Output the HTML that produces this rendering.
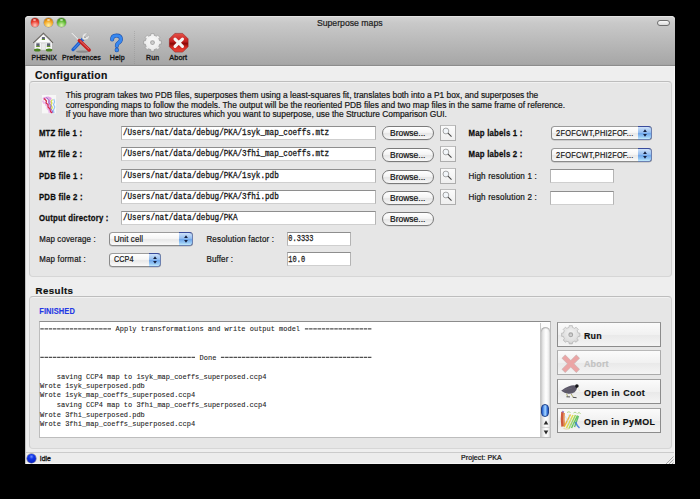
<!DOCTYPE html><html><head><meta charset="utf-8"><style>
html,body{margin:0;padding:0;}
body{width:700px;height:499px;background:#000;position:relative;overflow:hidden;font-family:'Liberation Sans',sans-serif;}
.t{position:absolute;white-space:pre;line-height:1;}
svg{overflow:visible}
.s{position:absolute;left:0;top:0;}
</style></head><body>
<div style="position:absolute;left:25.00px;top:16.00px;width:650.00px;height:448.00px;box-sizing:border-box;background:#eeeeee;border-radius:4px 4px 0 0;"></div>
<div style="position:absolute;left:25.00px;top:16.00px;width:650.00px;height:49.00px;box-sizing:border-box;border-radius:4px 4px 0 0;background:linear-gradient(#d3d3d3,#c9c9c9 12%,#a7a7a7 97%,#a2a2a2);border-top:1px solid #e4e4e4;"></div>
<div style="position:absolute;left:25.00px;top:64.60px;width:650.00px;height:1.00px;box-sizing:border-box;background:#8c8c8c;"></div>
<div style="position:absolute;left:25.00px;top:65.60px;width:650.00px;height:0.80px;box-sizing:border-box;background:#f2f2f2;"></div>
<div style="position:absolute;left:25.00px;top:66.00px;width:1.00px;height:398.00px;box-sizing:border-box;background:#c4c4c4;"></div>
<div style="position:absolute;left:674.00px;top:66.00px;width:1.00px;height:398.00px;box-sizing:border-box;background:#f6f6f6;"></div>
<div style="position:absolute;left:30.50px;top:18.3px;width:8.8px;height:8.8px;border-radius:50%;background:radial-gradient(circle at 50% 80%, #ffc9c0 0%, #ea3a2c 52%, #921c12 100%);box-shadow:0 0 0 0.5px rgba(60,60,60,.45);"></div>
<div style="position:absolute;left:33.30px;top:19.0px;width:3.2px;height:2.0px;border-radius:50%;background:rgba(255,255,255,.6);"></div>
<div style="position:absolute;left:44.00px;top:18.3px;width:8.8px;height:8.8px;border-radius:50%;background:radial-gradient(circle at 50% 80%, #fff3a8 0%, #f4a41e 52%, #a85c06 100%);box-shadow:0 0 0 0.5px rgba(60,60,60,.45);"></div>
<div style="position:absolute;left:46.80px;top:19.0px;width:3.2px;height:2.0px;border-radius:50%;background:rgba(255,255,255,.6);"></div>
<div style="position:absolute;left:57.20px;top:18.3px;width:8.8px;height:8.8px;border-radius:50%;background:radial-gradient(circle at 50% 80%, #dcf8b6 0%, #5cb830 52%, #2d6c10 100%);box-shadow:0 0 0 0.5px rgba(60,60,60,.45);"></div>
<div style="position:absolute;left:60.00px;top:19.0px;width:3.2px;height:2.0px;border-radius:50%;background:rgba(255,255,255,.6);"></div>
<svg class="s" width="1" height="1"><text transform="translate(316.90 25.80) scale(1 1.13)" fill="#1e1e1e" stroke="#1e1e1e" stroke-width="0.2" style="font-family:'Liberation Sans', sans-serif;font-size:8.7px;font-weight:normal;white-space:pre;">Superpose maps</text></svg>
<div style="position:absolute;left:657.00px;top:19.50px;width:13.00px;height:6.50px;box-sizing:border-box;border-radius:3.5px;border:1px solid #6e6e6e;background:linear-gradient(#fafafa,#dadada);"></div>
<svg class="s" width="1" height="1"><text transform="translate(31.60 60.00) scale(1 1.0)" fill="#141414" stroke="#141414" stroke-width="0.32" style="font-family:'Liberation Sans', sans-serif;font-size:6.8px;font-weight:normal;white-space:pre;">PHENIX</text></svg>
<svg class="s" width="1" height="1"><text transform="translate(62.10 60.00) scale(1 1.0)" fill="#141414" stroke="#141414" stroke-width="0.32" style="font-family:'Liberation Sans', sans-serif;font-size:7.0px;font-weight:normal;white-space:pre;letter-spacing:0.1px;">Preferences</text></svg>
<svg class="s" width="1" height="1"><text transform="translate(109.70 60.00) scale(1 1.0)" fill="#141414" stroke="#141414" stroke-width="0.32" style="font-family:'Liberation Sans', sans-serif;font-size:7.1px;font-weight:normal;white-space:pre;letter-spacing:0.1px;">Help</text></svg>
<svg class="s" width="1" height="1"><text transform="translate(146.00 60.00) scale(1 1.0)" fill="#141414" stroke="#141414" stroke-width="0.32" style="font-family:'Liberation Sans', sans-serif;font-size:7.0px;font-weight:normal;white-space:pre;letter-spacing:0.1px;">Run</text></svg>
<svg class="s" width="1" height="1"><text transform="translate(169.30 60.00) scale(1 1.0)" fill="#141414" stroke="#141414" stroke-width="0.32" style="font-family:'Liberation Sans', sans-serif;font-size:7.3px;font-weight:normal;white-space:pre;letter-spacing:0.1px;">Abort</text></svg>
<div style="position:absolute;left:134.30px;top:31.00px;width:1.00px;height:32.50px;box-sizing:border-box;background:repeating-linear-gradient(#8a8a8a 0 1px, transparent 1px 2px);opacity:.4;"></div>
<svg style="position:absolute;left:33px;top:32px;" width="21" height="20" viewBox="0 0 21 20">
<path d="M1.7 10.7 L10.3 2.3 L18.9 10.7Z" fill="#fbfbfb"/>
<rect x="1.6" y="10.3" width="17.4" height="7.6" fill="#f3f3f3"/>
<rect x="1.6" y="10.2" width="17.4" height="0.7" fill="#d8d8d8"/>
<path d="M0.4 10.9 L10.3 1.2 L20.2 10.9" stroke="#4f4a44" stroke-width="1.05" fill="none" stroke-dasharray="1.1 0.35"/>
<rect x="8.6" y="11.2" width="3.8" height="6.7" fill="#e9e9e9" stroke="#c4c4c4" stroke-width="0.35"/>
<rect x="3.3" y="11.3" width="3.3" height="3.5" fill="#5c6072"/><rect x="3.3" y="13.9" width="3.3" height="1.1" fill="#6a9a30"/>
<rect x="13.9" y="11.3" width="3.3" height="3.5" fill="#5c6072"/><rect x="13.9" y="13.9" width="3.3" height="1.1" fill="#6a9a30"/>
<rect x="8.9" y="5.1" width="3" height="2.9" fill="#5c6072"/><rect x="8.9" y="7.0" width="3" height="1.0" fill="#6a9a30"/>
<ellipse cx="4.3" cy="17.9" rx="3.3" ry="1.5" fill="#4b8420"/><ellipse cx="16.1" cy="17.9" rx="3.3" ry="1.5" fill="#4b8420"/>
</svg>
<svg style="position:absolute;left:68px;top:30px;" width="28" height="24" viewBox="0 0 28 24">
<ellipse cx="14.5" cy="21.6" rx="6.5" ry="1.1" fill="rgba(0,0,0,.22)"/>
<line x1="3.8" y1="3.1" x2="12" y2="11.3" stroke="#f6f6f6" stroke-width="0.95"/>
<path d="M15.5 8.5 L5 19.6" stroke="#1c5fd0" stroke-width="3.3" stroke-linecap="round"/>
<path d="M14.6 9.6 L5.6 19" stroke="#6aa6f0" stroke-width="0.8"/>
<path d="M14.2 8.8 Q13.4 4.6 16.6 3.2 Q18.2 2.6 19.4 3.1 L17.4 5.4 L18.8 6.9 L21 4.9 Q21.6 6.4 21 7.8 Q19.6 10.4 16 9.9Z" fill="#e6e6e6" stroke="#a6a6a6" stroke-width="0.45"/>
<circle cx="17.0" cy="7.1" r="0.9" fill="#8c8c8c"/>
<path d="M11.3 10.6 L21.2 20" stroke="#c51c1c" stroke-width="3.4" stroke-linecap="round"/>
<path d="M11.8 10.4 L21.1 19.3" stroke="#f0a0a0" stroke-width="0.7"/>
</svg>
<svg style="position:absolute;left:109px;top:33.5px;" width="15" height="19" viewBox="0 0 15 19">
<path d="M3.1 5.6 Q3.1 1.6 7.5 1.6 Q11.9 1.6 11.9 5.3 Q11.9 7.5 9.3 8.9 Q7.8 9.8 7.8 11.9" fill="none" stroke="#1d4fa8" stroke-width="4.0" stroke-linecap="round"/>
<path d="M3.1 5.6 Q3.1 1.6 7.5 1.6 Q11.9 1.6 11.9 5.3 Q11.9 7.5 9.3 8.9 Q7.8 9.8 7.8 11.9" fill="none" stroke="#3888f0" stroke-width="2.9" stroke-linecap="round"/>
<circle cx="7.8" cy="16" r="2.2" fill="#1d4fa8"/><circle cx="7.8" cy="16" r="1.65" fill="#3888f0"/>
</svg>
<svg style="position:absolute;left:142.8px;top:32.6px;" width="19" height="19" viewBox="0 0 20 20"><defs><radialGradient id="g1" cx="50%" cy="40%" r="65%"><stop offset="0" stop-color="#fafafa"/><stop offset="0.7" stop-color="#ececec"/><stop offset="1" stop-color="#d6d6d6"/></radialGradient></defs>
<polygon points="17.11,7.05 17.49,8.20 19.36,8.37 19.36,11.63 17.49,11.80 17.11,12.95 16.57,14.02 17.77,15.46 15.46,17.77 14.02,16.57 12.95,17.11 11.80,17.49 11.63,19.36 8.37,19.36 8.20,17.49 7.05,17.11 5.98,16.57 4.54,17.77 2.23,15.46 3.43,14.02 2.89,12.95 2.51,11.80 0.64,11.63 0.64,8.37 2.51,8.20 2.89,7.05 3.43,5.98 2.23,4.54 4.54,2.23 5.98,3.43 7.05,2.89 8.20,2.51 8.37,0.64 11.63,0.64 11.80,2.51 12.95,2.89 14.02,3.43 15.46,2.23 17.77,4.54 16.57,5.98" fill="url(#g1)" stroke="#8e8e8e" stroke-width="0.6" stroke-linejoin="round"/>
<circle cx="10" cy="10" r="2.5" fill="#a4a4a4"/><circle cx="10" cy="10.2" r="1.4" fill="#cfcfcf"/></svg>
<svg style="position:absolute;left:168.5px;top:32.6px;" width="19.5" height="19.5" viewBox="0 0 20 20">
<defs><linearGradient id="ab" x1="0" y1="0" x2="0" y2="1"><stop offset="0" stop-color="#e65048"/><stop offset="0.42" stop-color="#c42020"/><stop offset="0.55" stop-color="#8c0808"/><stop offset="0.75" stop-color="#d82a22"/><stop offset="1" stop-color="#e84a40"/></linearGradient></defs>
<polygon points="6,0.4 14,0.4 19.6,6 19.6,14 14,19.6 6,19.6 0.4,14 0.4,6" fill="url(#ab)" stroke="#8a1010" stroke-width="0.5" stroke-linejoin="round"/>
<path d="M6.2 6.2 L13.8 13.8 M13.8 6.2 L6.2 13.8" stroke="#f4f4f4" stroke-width="3.2" stroke-linecap="round"/>
</svg>
<svg class="s" width="1" height="1"><text transform="translate(35.00 79.00) scale(1 1.0)" fill="#0e0e0e" stroke="#0e0e0e" stroke-width="0.15" style="font-family:'Liberation Sans', sans-serif;font-size:10.4px;font-weight:bold;white-space:pre;letter-spacing:0.35px;">Configuration</text></svg>
<div style="position:absolute;left:28.70px;top:80.60px;width:643.10px;height:196.20px;box-sizing:border-box;border:1px solid #cfcfcf;border-top-color:#bdbdbd;border-bottom-color:#d6d6d6;border-radius:4px;background:#e6e6e6;box-shadow:inset 0 1px 0 rgba(255,255,255,.45);"></div>
<svg style="position:absolute;left:39px;top:93px;" width="20" height="23" viewBox="0 0 20 23">
<rect x="2.8" y="1.8" width="14.5" height="19" fill="#f7f7f7" stroke="#e2e2e2" stroke-width="0.4"/>
<path d="M4 6 L6 5 L9 4.5 L11.5 5.5 L10 7.5 L11 9.5 L9.5 11.5 L11 13.5 L10.5 16 L12 18.5 L12.5 20" fill="none" stroke="#de8ade" stroke-width="2.2" opacity=".75" stroke-linejoin="round"/>
<path d="M3.6 7.5 L5 10 L6.5 9.5 L7 12 L8.5 13 L8.5 15.5 L10 17 L10.5 20" fill="none" stroke="#e6a0e6" stroke-width="1.8" opacity=".7" stroke-linejoin="round"/>
<path d="M5 5.5 L7.5 8 L7 10 L9 11.5 L9 14 L11 16 L11.5 18.5 L13 20" fill="none" stroke="#d42a48" stroke-width="1.1" stroke-linejoin="round"/>
<path d="M13.5 6.5 L12 8.5 L13 10 L11.8 12 L13.2 14 L12.5 16.5" fill="none" stroke="#d6da3e" stroke-width="1.2" stroke-linejoin="round"/>
<path d="M14.8 6 L15.6 9 L14.5 11.5 L15.8 14 L14.5 17 L15 20" fill="none" stroke="#90c4f2" stroke-width="1.1" stroke-linejoin="round"/>
<path d="M7.5 4.5 L10 7.5 L9.8 10 L12 12.5 L11.5 15.5 L13.5 18 L13.8 20.2" fill="none" stroke="#8458c4" stroke-width="0.9" stroke-linejoin="round"/>
</svg>
<svg class="s" width="1" height="1"><text transform="translate(65.70 98.00) scale(1 1.0)" fill="#161616" stroke="#161616" stroke-width="0.2" style="font-family:'Liberation Sans', sans-serif;font-size:8.4px;font-weight:normal;white-space:pre;">This program takes two PDB files, superposes them using a least-squares fit, translates both into a P1 box, and superposes the</text></svg>
<svg class="s" width="1" height="1"><text transform="translate(65.70 108.00) scale(1 1.0)" fill="#161616" stroke="#161616" stroke-width="0.2" style="font-family:'Liberation Sans', sans-serif;font-size:8.4px;font-weight:normal;white-space:pre;">corresponding maps to follow the models. The output will be the reoriented PDB files and two map files in the same frame of reference.</text></svg>
<svg class="s" width="1" height="1"><text transform="translate(65.70 117.00) scale(1 1.0)" fill="#161616" stroke="#161616" stroke-width="0.2" style="font-family:'Liberation Sans', sans-serif;font-size:8.4px;font-weight:normal;white-space:pre;">If you have more than two structures which you want to superpose, use the Structure Comparison GUI.</text></svg>
<svg class="s" width="1" height="1"><text transform="translate(38.90 136.00) scale(1 1.14)" fill="#0c0c0c" stroke="#0c0c0c" stroke-width="0.22" style="font-family:'Liberation Sans', sans-serif;font-size:7.8px;font-weight:bold;white-space:pre;letter-spacing:0.22px;">MTZ file 1 :</text></svg>
<div style="position:absolute;left:121.00px;top:126.00px;width:254.50px;height:14.00px;box-sizing:border-box;background:#fff;border:1px solid #b4b4b4;border-top-color:#8e8e8e;border-bottom-color:#cfcfcf;"></div>
<svg class="s" width="1" height="1"><text transform="translate(122.90 135.00) scale(1 1.12)" fill="#151515" stroke="#151515" stroke-width="0.25" style="font-family:'Liberation Mono', monospace;font-size:7.65px;font-weight:normal;white-space:pre;">/Users/nat/data/debug/PKA/1syk_map_coeffs.mtz</text></svg>
<div style="position:absolute;left:381.70px;top:126.00px;width:51.90px;height:14.00px;box-sizing:border-box;border-radius:7.0px;border:1px solid #7a7a7a;background:linear-gradient(#ffffff,#f4f4f4 45%,#e6e6e6 55%,#f8f8f8);box-shadow:0 0.6px 0.4px rgba(0,0,0,.12);"></div>
<svg class="s" width="1" height="1"><text transform="translate(390.00 136.00) scale(1 1.0)" fill="#111" stroke="#111" stroke-width="0.2" style="font-family:'Liberation Sans', sans-serif;font-size:8.5px;font-weight:normal;white-space:pre;">Browse...</text></svg>
<div style="position:absolute;left:440.20px;top:125.30px;width:15.50px;height:15.40px;box-sizing:border-box;border:1px solid #adadad;border-top-color:#bdbdbd;background:linear-gradient(#fbfbfb,#efefef);"></div>
<svg style="position:absolute;left:440.2px;top:125.3px;" width="15" height="15" viewBox="0 0 15 15"><circle cx="5.9" cy="6.0" r="2.9" fill="#f2f6fa" stroke="#8a8a8a" stroke-width="0.75"/><line x1="8.0" y1="8.2" x2="11.5" y2="11.7" stroke="#454545" stroke-width="1.05"/></svg>
<svg class="s" width="1" height="1"><text transform="translate(38.90 157.00) scale(1 1.14)" fill="#0c0c0c" stroke="#0c0c0c" stroke-width="0.22" style="font-family:'Liberation Sans', sans-serif;font-size:7.8px;font-weight:bold;white-space:pre;letter-spacing:0.22px;">MTZ file 2 :</text></svg>
<div style="position:absolute;left:121.00px;top:147.00px;width:254.50px;height:14.00px;box-sizing:border-box;background:#fff;border:1px solid #b4b4b4;border-top-color:#8e8e8e;border-bottom-color:#cfcfcf;"></div>
<svg class="s" width="1" height="1"><text transform="translate(122.90 156.00) scale(1 1.12)" fill="#151515" stroke="#151515" stroke-width="0.25" style="font-family:'Liberation Mono', monospace;font-size:7.65px;font-weight:normal;white-space:pre;">/Users/nat/data/debug/PKA/3fhi_map_coeffs.mtz</text></svg>
<div style="position:absolute;left:381.70px;top:148.00px;width:51.90px;height:14.00px;box-sizing:border-box;border-radius:7.0px;border:1px solid #7a7a7a;background:linear-gradient(#ffffff,#f4f4f4 45%,#e6e6e6 55%,#f8f8f8);box-shadow:0 0.6px 0.4px rgba(0,0,0,.12);"></div>
<svg class="s" width="1" height="1"><text transform="translate(390.00 158.00) scale(1 1.0)" fill="#111" stroke="#111" stroke-width="0.2" style="font-family:'Liberation Sans', sans-serif;font-size:8.5px;font-weight:normal;white-space:pre;">Browse...</text></svg>
<div style="position:absolute;left:440.20px;top:146.30px;width:15.50px;height:15.40px;box-sizing:border-box;border:1px solid #adadad;border-top-color:#bdbdbd;background:linear-gradient(#fbfbfb,#efefef);"></div>
<svg style="position:absolute;left:440.2px;top:146.3px;" width="15" height="15" viewBox="0 0 15 15"><circle cx="5.9" cy="6.0" r="2.9" fill="#f2f6fa" stroke="#8a8a8a" stroke-width="0.75"/><line x1="8.0" y1="8.2" x2="11.5" y2="11.7" stroke="#454545" stroke-width="1.05"/></svg>
<svg class="s" width="1" height="1"><text transform="translate(38.90 179.00) scale(1 1.14)" fill="#0c0c0c" stroke="#0c0c0c" stroke-width="0.22" style="font-family:'Liberation Sans', sans-serif;font-size:7.8px;font-weight:bold;white-space:pre;letter-spacing:0.22px;">PDB file 1 :</text></svg>
<div style="position:absolute;left:121.00px;top:169.00px;width:254.50px;height:14.00px;box-sizing:border-box;background:#fff;border:1px solid #b4b4b4;border-top-color:#8e8e8e;border-bottom-color:#cfcfcf;"></div>
<svg class="s" width="1" height="1"><text transform="translate(122.90 178.00) scale(1 1.12)" fill="#151515" stroke="#151515" stroke-width="0.25" style="font-family:'Liberation Mono', monospace;font-size:7.65px;font-weight:normal;white-space:pre;">/Users/nat/data/debug/PKA/1syk.pdb</text></svg>
<div style="position:absolute;left:381.70px;top:170.00px;width:51.90px;height:14.00px;box-sizing:border-box;border-radius:7.0px;border:1px solid #7a7a7a;background:linear-gradient(#ffffff,#f4f4f4 45%,#e6e6e6 55%,#f8f8f8);box-shadow:0 0.6px 0.4px rgba(0,0,0,.12);"></div>
<svg class="s" width="1" height="1"><text transform="translate(390.00 180.00) scale(1 1.0)" fill="#111" stroke="#111" stroke-width="0.2" style="font-family:'Liberation Sans', sans-serif;font-size:8.5px;font-weight:normal;white-space:pre;">Browse...</text></svg>
<div style="position:absolute;left:440.20px;top:168.30px;width:15.50px;height:15.40px;box-sizing:border-box;border:1px solid #adadad;border-top-color:#bdbdbd;background:linear-gradient(#fbfbfb,#efefef);"></div>
<svg style="position:absolute;left:440.2px;top:168.3px;" width="15" height="15" viewBox="0 0 15 15"><circle cx="5.9" cy="6.0" r="2.9" fill="#f2f6fa" stroke="#8a8a8a" stroke-width="0.75"/><line x1="8.0" y1="8.2" x2="11.5" y2="11.7" stroke="#454545" stroke-width="1.05"/></svg>
<svg class="s" width="1" height="1"><text transform="translate(38.90 200.40) scale(1 1.14)" fill="#0c0c0c" stroke="#0c0c0c" stroke-width="0.22" style="font-family:'Liberation Sans', sans-serif;font-size:7.8px;font-weight:bold;white-space:pre;letter-spacing:0.22px;">PDB file 2 :</text></svg>
<div style="position:absolute;left:121.00px;top:190.00px;width:254.50px;height:14.00px;box-sizing:border-box;background:#fff;border:1px solid #b4b4b4;border-top-color:#8e8e8e;border-bottom-color:#cfcfcf;"></div>
<svg class="s" width="1" height="1"><text transform="translate(122.90 199.00) scale(1 1.12)" fill="#151515" stroke="#151515" stroke-width="0.25" style="font-family:'Liberation Mono', monospace;font-size:7.65px;font-weight:normal;white-space:pre;">/Users/nat/data/debug/PKA/3fhi.pdb</text></svg>
<div style="position:absolute;left:381.70px;top:191.00px;width:51.90px;height:14.00px;box-sizing:border-box;border-radius:7.0px;border:1px solid #7a7a7a;background:linear-gradient(#ffffff,#f4f4f4 45%,#e6e6e6 55%,#f8f8f8);box-shadow:0 0.6px 0.4px rgba(0,0,0,.12);"></div>
<svg class="s" width="1" height="1"><text transform="translate(390.00 201.00) scale(1 1.0)" fill="#111" stroke="#111" stroke-width="0.2" style="font-family:'Liberation Sans', sans-serif;font-size:8.5px;font-weight:normal;white-space:pre;">Browse...</text></svg>
<div style="position:absolute;left:440.20px;top:189.30px;width:15.50px;height:15.40px;box-sizing:border-box;border:1px solid #adadad;border-top-color:#bdbdbd;background:linear-gradient(#fbfbfb,#efefef);"></div>
<svg style="position:absolute;left:440.2px;top:189.3px;" width="15" height="15" viewBox="0 0 15 15"><circle cx="5.9" cy="6.0" r="2.9" fill="#f2f6fa" stroke="#8a8a8a" stroke-width="0.75"/><line x1="8.0" y1="8.2" x2="11.5" y2="11.7" stroke="#454545" stroke-width="1.05"/></svg>
<svg class="s" width="1" height="1"><text transform="translate(38.90 221.00) scale(1 1.14)" fill="#0c0c0c" stroke="#0c0c0c" stroke-width="0.22" style="font-family:'Liberation Sans', sans-serif;font-size:7.8px;font-weight:bold;white-space:pre;letter-spacing:0.22px;">Output directory :</text></svg>
<div style="position:absolute;left:121.00px;top:211.00px;width:254.50px;height:14.00px;box-sizing:border-box;background:#fff;border:1px solid #b4b4b4;border-top-color:#8e8e8e;border-bottom-color:#cfcfcf;"></div>
<svg class="s" width="1" height="1"><text transform="translate(122.90 220.00) scale(1 1.12)" fill="#151515" stroke="#151515" stroke-width="0.25" style="font-family:'Liberation Mono', monospace;font-size:7.65px;font-weight:normal;white-space:pre;">/Users/nat/data/debug/PKA</text></svg>
<div style="position:absolute;left:381.70px;top:212.00px;width:51.90px;height:14.00px;box-sizing:border-box;border-radius:7.0px;border:1px solid #7a7a7a;background:linear-gradient(#ffffff,#f4f4f4 45%,#e6e6e6 55%,#f8f8f8);box-shadow:0 0.6px 0.4px rgba(0,0,0,.12);"></div>
<svg class="s" width="1" height="1"><text transform="translate(390.00 222.00) scale(1 1.0)" fill="#111" stroke="#111" stroke-width="0.2" style="font-family:'Liberation Sans', sans-serif;font-size:8.5px;font-weight:normal;white-space:pre;">Browse...</text></svg>
<svg class="s" width="1" height="1"><text transform="translate(468.60 135.90) scale(1 1.14)" fill="#0c0c0c" stroke="#0c0c0c" stroke-width="0.22" style="font-family:'Liberation Sans', sans-serif;font-size:7.8px;font-weight:bold;white-space:pre;letter-spacing:0.2px;">Map labels 1 :</text></svg>
<svg class="s" width="1" height="1"><text transform="translate(468.60 157.00) scale(1 1.14)" fill="#0c0c0c" stroke="#0c0c0c" stroke-width="0.22" style="font-family:'Liberation Sans', sans-serif;font-size:7.8px;font-weight:bold;white-space:pre;letter-spacing:0.2px;">Map labels 2 :</text></svg>
<div style="position:absolute;left:551.00px;top:126.10px;width:100.70px;height:13.80px;box-sizing:border-box;border-radius:3.5px;border:1px solid #8a8a8a;border-top-color:#9c9c9c;background:linear-gradient(#ffffff,#f6f6f6 45%,#e8e8e8 55%,#fafafa);box-shadow:0 0.6px 0.6px rgba(0,0,0,.22);"></div>
<div style="position:absolute;left:638.10px;top:126.10px;width:13.60px;height:13.80px;box-sizing:border-box;border-radius:0 3.8px 3.8px 0;border:1px solid #6c80b0;border-top-color:#3a4c9c;border-left:none;background:linear-gradient(#cfe2fa,#94bdf0 45%,#6ea6ea 55%,#9ccdf6 85%,#c4ecfc);"></div>
<svg style="position:absolute;left:641.9px;top:128.0px;" width="6" height="10" viewBox="0 0 6 10"><path d="M3 1.3 L4.9 3.9 L1.1 3.9Z M3 8.7 L4.9 6.1 L1.1 6.1Z" fill="#152040"/></svg>
<svg class="s" width="1" height="1"><text transform="translate(556.10 135.70) scale(1 1.15)" fill="#111" stroke="#111" stroke-width="0.15" style="font-family:'Liberation Sans', sans-serif;font-size:7.4px;font-weight:normal;white-space:pre;letter-spacing:0.22px;">2FOFCWT,PHI2FOF...</text></svg>
<div style="position:absolute;left:551.00px;top:148.10px;width:100.70px;height:13.80px;box-sizing:border-box;border-radius:3.5px;border:1px solid #8a8a8a;border-top-color:#9c9c9c;background:linear-gradient(#ffffff,#f6f6f6 45%,#e8e8e8 55%,#fafafa);box-shadow:0 0.6px 0.6px rgba(0,0,0,.22);"></div>
<div style="position:absolute;left:638.10px;top:148.10px;width:13.60px;height:13.80px;box-sizing:border-box;border-radius:0 3.8px 3.8px 0;border:1px solid #6c80b0;border-top-color:#3a4c9c;border-left:none;background:linear-gradient(#cfe2fa,#94bdf0 45%,#6ea6ea 55%,#9ccdf6 85%,#c4ecfc);"></div>
<svg style="position:absolute;left:641.9px;top:150.0px;" width="6" height="10" viewBox="0 0 6 10"><path d="M3 1.3 L4.9 3.9 L1.1 3.9Z M3 8.7 L4.9 6.1 L1.1 6.1Z" fill="#152040"/></svg>
<svg class="s" width="1" height="1"><text transform="translate(556.10 157.70) scale(1 1.15)" fill="#111" stroke="#111" stroke-width="0.15" style="font-family:'Liberation Sans', sans-serif;font-size:7.4px;font-weight:normal;white-space:pre;letter-spacing:0.22px;">2FOFCWT,PHI2FOF...</text></svg>
<svg class="s" width="1" height="1"><text transform="translate(468.40 178.90) scale(1 1.14)" fill="#161616" stroke="#161616" stroke-width="0.2" style="font-family:'Liberation Sans', sans-serif;font-size:8.1px;font-weight:normal;white-space:pre;letter-spacing:0.18px;">High resolution 1 :</text></svg>
<svg class="s" width="1" height="1"><text transform="translate(468.40 200.00) scale(1 1.14)" fill="#161616" stroke="#161616" stroke-width="0.2" style="font-family:'Liberation Sans', sans-serif;font-size:8.1px;font-weight:normal;white-space:pre;letter-spacing:0.18px;">High resolution 2 :</text></svg>
<div style="position:absolute;left:550.20px;top:169.00px;width:63.80px;height:14.00px;box-sizing:border-box;background:#fff;border:1px solid #b4b4b4;border-top-color:#8e8e8e;border-bottom-color:#cfcfcf;"></div>
<div style="position:absolute;left:550.20px;top:190.60px;width:63.80px;height:14.30px;box-sizing:border-box;background:#fff;border:1px solid #b4b4b4;border-top-color:#8e8e8e;border-bottom-color:#cfcfcf;"></div>
<svg class="s" width="1" height="1"><text transform="translate(39.20 242.00) scale(1 1.14)" fill="#161616" stroke="#161616" stroke-width="0.2" style="font-family:'Liberation Sans', sans-serif;font-size:7.9px;font-weight:normal;white-space:pre;letter-spacing:0.15px;">Map coverage :</text></svg>
<svg class="s" width="1" height="1"><text transform="translate(39.20 261.90) scale(1 1.14)" fill="#161616" stroke="#161616" stroke-width="0.2" style="font-family:'Liberation Sans', sans-serif;font-size:7.9px;font-weight:normal;white-space:pre;letter-spacing:0.2px;">Map format :</text></svg>
<div style="position:absolute;left:108.90px;top:232.20px;width:84.30px;height:13.70px;box-sizing:border-box;border-radius:3.5px;border:1px solid #8a8a8a;border-top-color:#9c9c9c;background:linear-gradient(#ffffff,#f6f6f6 45%,#e8e8e8 55%,#fafafa);box-shadow:0 0.6px 0.6px rgba(0,0,0,.22);"></div>
<div style="position:absolute;left:179.30px;top:232.20px;width:13.90px;height:13.70px;box-sizing:border-box;border-radius:0 3.8px 3.8px 0;border:1px solid #6c80b0;border-top-color:#3a4c9c;border-left:none;background:linear-gradient(#cfe2fa,#94bdf0 45%,#6ea6ea 55%,#9ccdf6 85%,#c4ecfc);"></div>
<svg style="position:absolute;left:183.25px;top:234.05px;" width="6" height="10" viewBox="0 0 6 10"><path d="M3 1.3 L4.9 3.9 L1.1 3.9Z M3 8.7 L4.9 6.1 L1.1 6.1Z" fill="#152040"/></svg>
<svg class="s" width="1" height="1"><text transform="translate(114.00 242.10) scale(1 1.15)" fill="#111" stroke="#111" stroke-width="0.15" style="font-family:'Liberation Sans', sans-serif;font-size:7.9px;font-weight:normal;white-space:pre;letter-spacing:0.12px;">Unit cell</text></svg>
<div style="position:absolute;left:108.90px;top:253.20px;width:52.20px;height:13.70px;box-sizing:border-box;border-radius:3.5px;border:1px solid #8a8a8a;border-top-color:#9c9c9c;background:linear-gradient(#ffffff,#f6f6f6 45%,#e8e8e8 55%,#fafafa);box-shadow:0 0.6px 0.6px rgba(0,0,0,.22);"></div>
<div style="position:absolute;left:149.00px;top:253.20px;width:12.10px;height:13.70px;box-sizing:border-box;border-radius:0 3.8px 3.8px 0;border:1px solid #6c80b0;border-top-color:#3a4c9c;border-left:none;background:linear-gradient(#cfe2fa,#94bdf0 45%,#6ea6ea 55%,#9ccdf6 85%,#c4ecfc);"></div>
<svg style="position:absolute;left:152.05px;top:255.05px;" width="6" height="10" viewBox="0 0 6 10"><path d="M3 1.3 L4.9 3.9 L1.1 3.9Z M3 8.7 L4.9 6.1 L1.1 6.1Z" fill="#152040"/></svg>
<svg class="s" width="1" height="1"><text transform="translate(114.00 262.10) scale(1 1.15)" fill="#111" stroke="#111" stroke-width="0.15" style="font-family:'Liberation Sans', sans-serif;font-size:7.3px;font-weight:normal;white-space:pre;">CCP4</text></svg>
<svg class="s" width="1" height="1"><text transform="translate(206.40 242.10) scale(1 1.14)" fill="#161616" stroke="#161616" stroke-width="0.2" style="font-family:'Liberation Sans', sans-serif;font-size:8.0px;font-weight:normal;white-space:pre;letter-spacing:0.18px;">Resolution factor :</text></svg>
<svg class="s" width="1" height="1"><text transform="translate(206.40 262.00) scale(1 1.14)" fill="#161616" stroke="#161616" stroke-width="0.2" style="font-family:'Liberation Sans', sans-serif;font-size:8.0px;font-weight:normal;white-space:pre;letter-spacing:0.15px;">Buffer :</text></svg>
<div style="position:absolute;left:286.90px;top:231.90px;width:64.00px;height:13.70px;box-sizing:border-box;background:#fff;border:1px solid #b4b4b4;border-top-color:#8e8e8e;border-bottom-color:#cfcfcf;"></div>
<div style="position:absolute;left:286.90px;top:252.40px;width:64.00px;height:13.70px;box-sizing:border-box;background:#fff;border:1px solid #b4b4b4;border-top-color:#8e8e8e;border-bottom-color:#cfcfcf;"></div>
<svg class="s" width="1" height="1"><text transform="translate(288.30 241.20) scale(1 1.3)" fill="#1a1a1a" stroke="#1a1a1a" stroke-width="0.2" style="font-family:'Liberation Mono', monospace;font-size:7.0px;font-weight:normal;white-space:pre;">0.3333</text></svg>
<svg class="s" width="1" height="1"><text transform="translate(288.30 261.70) scale(1 1.3)" fill="#1a1a1a" stroke="#1a1a1a" stroke-width="0.2" style="font-family:'Liberation Mono', monospace;font-size:7.0px;font-weight:normal;white-space:pre;">10.0</text></svg>
<svg class="s" width="1" height="1"><text transform="translate(35.60 294.00) scale(1 1.03)" fill="#0e0e0e" stroke="#0e0e0e" stroke-width="0.18" style="font-family:'Liberation Sans', sans-serif;font-size:9.7px;font-weight:bold;white-space:pre;letter-spacing:0.4px;">Results</text></svg>
<div style="position:absolute;left:28.70px;top:296.30px;width:643.20px;height:152.70px;box-sizing:border-box;border:1px solid #cfcfcf;border-top-color:#bdbdbd;border-bottom-color:#d6d6d6;border-radius:4px;background:#e6e6e6;box-shadow:inset 0 1px 0 rgba(255,255,255,.45);"></div>
<svg class="s" width="1" height="1"><text transform="translate(39.20 313.60) scale(1 1.15)" fill="#2438e4" stroke="#2438e4" stroke-width="0.1" style="font-family:'Liberation Sans', sans-serif;font-size:7.5px;font-weight:bold;white-space:pre;letter-spacing:0.1px;">FINISHED</text></svg>
<div style="position:absolute;left:38.90px;top:321.40px;width:512.10px;height:116.50px;box-sizing:border-box;background:#fff;border:1px solid #bdbdbd;border-top:1.4px solid #8c8c8c;"></div>
<svg class="s" width="1" height="1"><text transform="translate(40.00 379.00) scale(1 1.1)" fill="#1a1a1a" stroke="#1a1a1a" stroke-width="0.08" style="font-family:'Liberation Mono', monospace;font-size:7.0px;font-weight:normal;white-space:pre;">    saving CCP4 map to 1syk_map_coeffs_superposed.ccp4</text></svg>
<svg class="s" width="1" height="1"><text transform="translate(40.00 388.00) scale(1 1.1)" fill="#1a1a1a" stroke="#1a1a1a" stroke-width="0.08" style="font-family:'Liberation Mono', monospace;font-size:7.0px;font-weight:normal;white-space:pre;">Wrote 1syk_superposed.pdb</text></svg>
<svg class="s" width="1" height="1"><text transform="translate(40.00 397.00) scale(1 1.1)" fill="#1a1a1a" stroke="#1a1a1a" stroke-width="0.08" style="font-family:'Liberation Mono', monospace;font-size:7.0px;font-weight:normal;white-space:pre;">Wrote 1syk_map_coeffs_superposed.ccp4</text></svg>
<svg class="s" width="1" height="1"><text transform="translate(40.00 407.00) scale(1 1.1)" fill="#1a1a1a" stroke="#1a1a1a" stroke-width="0.08" style="font-family:'Liberation Mono', monospace;font-size:7.0px;font-weight:normal;white-space:pre;">    saving CCP4 map to 3fhi_map_coeffs_superposed.ccp4</text></svg>
<svg class="s" width="1" height="1"><text transform="translate(40.00 416.60) scale(1 1.1)" fill="#1a1a1a" stroke="#1a1a1a" stroke-width="0.08" style="font-family:'Liberation Mono', monospace;font-size:7.0px;font-weight:normal;white-space:pre;">Wrote 3fhi_superposed.pdb</text></svg>
<svg class="s" width="1" height="1"><text transform="translate(40.00 426.00) scale(1 1.1)" fill="#1a1a1a" stroke="#1a1a1a" stroke-width="0.08" style="font-family:'Liberation Mono', monospace;font-size:7.0px;font-weight:normal;white-space:pre;">Wrote 3fhi_map_coeffs_superposed.ccp4</text></svg>
<svg class="s" width="1" height="1"><line x1="40.30" y1="328.90" x2="111.70" y2="328.90" stroke="#3c3c3c" stroke-width="1.35" stroke-dasharray="3.5 0.7" opacity=".9"/></svg>
<svg class="s" width="1" height="1"><text transform="translate(115.60 331.00) scale(1 1.1)" fill="#1a1a1a" stroke="#1a1a1a" stroke-width="0.08" style="font-family:'Liberation Mono', monospace;font-size:7.0px;font-weight:normal;white-space:pre;">Apply transformations and write output model</text></svg>
<svg class="s" width="1" height="1"><line x1="304.90" y1="328.90" x2="372.10" y2="328.90" stroke="#3c3c3c" stroke-width="1.35" stroke-dasharray="3.5 0.7" opacity=".9"/></svg>
<svg class="s" width="1" height="1"><line x1="40.30" y1="357.40" x2="195.70" y2="357.40" stroke="#3c3c3c" stroke-width="1.35" stroke-dasharray="3.5 0.7" opacity=".9"/></svg>
<svg class="s" width="1" height="1"><text transform="translate(199.60 360.00) scale(1 1.1)" fill="#1a1a1a" stroke="#1a1a1a" stroke-width="0.08" style="font-family:'Liberation Mono', monospace;font-size:7.0px;font-weight:normal;white-space:pre;">Done</text></svg>
<svg class="s" width="1" height="1"><line x1="220.90" y1="357.40" x2="372.10" y2="357.40" stroke="#3c3c3c" stroke-width="1.35" stroke-dasharray="3.5 0.7" opacity=".9"/></svg>
<div style="position:absolute;left:540.20px;top:322.60px;width:10.20px;height:114.80px;box-sizing:border-box;background:#fcfcfc;border-left:0.7px solid #c8c8c8;"></div>
<div style="position:absolute;left:540.50px;top:327.00px;width:9.70px;height:110.40px;box-sizing:border-box;border-radius:4.6px 4.6px 0 0;background:linear-gradient(90deg,#cfcfcf,#ededed 30%,#ffffff 55%,#f2f2f2 80%,#d9d9d9);box-shadow:inset 0 1.2px 1px rgba(0,0,0,.28);"></div>
<div style="position:absolute;left:540.60px;top:404.00px;width:8.60px;height:13.20px;box-sizing:border-box;border-radius:4.3px;background:linear-gradient(90deg,#1f56c8,#7fb8f8 40%,#a8d4ff 55%,#4d8ce6 80%,#1c4cb8);border:0.6px solid #20428a;"></div>
<svg style="position:absolute;left:540.5px;top:418px;" width="10" height="19" viewBox="0 0 10 19"><path d="M5 2.6 L7.3 6.4 L2.7 6.4Z" fill="#2a2a2a"/><line x1="0" y1="9.4" x2="10" y2="9.4" stroke="#c6c6c6" stroke-width="0.7"/><path d="M5 16.4 L7.3 12.6 L2.7 12.6Z" fill="#2a2a2a"/></svg>
<div style="position:absolute;left:557.20px;top:321.70px;width:103.90px;height:25.10px;box-sizing:border-box;border:1px solid #8c8c8c;border-top-color:#a2a2a2;background:linear-gradient(#fbfbfb,#f1f1f1 50%,#e9e9e9 52%,#f4f4f4);"></div>
<svg class="s" width="1" height="1"><text transform="translate(584.00 338.90) scale(1 1.12)" fill="#0e0e0e" stroke="#0e0e0e" stroke-width="0.15" style="font-family:'Liberation Sans', sans-serif;font-size:8.9px;font-weight:bold;white-space:pre;letter-spacing:0.2px;">Run</text></svg>
<div style="position:absolute;left:557.20px;top:350.40px;width:103.90px;height:24.30px;box-sizing:border-box;border:1px solid #ababab;border-top-color:#b8b8b8;background:linear-gradient(#fbfbfb,#f1f1f1 50%,#e9e9e9 52%,#f4f4f4);"></div>
<svg class="s" width="1" height="1"><text transform="translate(584.00 367.40) scale(1 1.12)" fill="#c2c2c2" stroke="#c2c2c2" stroke-width="0.15" style="font-family:'Liberation Sans', sans-serif;font-size:8.9px;font-weight:bold;white-space:pre;letter-spacing:0.2px;">Abort</text></svg>
<div style="position:absolute;left:557.20px;top:379.20px;width:103.90px;height:24.40px;box-sizing:border-box;border:1px solid #8c8c8c;border-top-color:#a2a2a2;background:linear-gradient(#fbfbfb,#f1f1f1 50%,#e9e9e9 52%,#f4f4f4);"></div>
<svg class="s" width="1" height="1"><text transform="translate(584.00 396.10) scale(1 1.12)" fill="#0e0e0e" stroke="#0e0e0e" stroke-width="0.15" style="font-family:'Liberation Sans', sans-serif;font-size:8.9px;font-weight:bold;white-space:pre;letter-spacing:0.45px;">Open in Coot</text></svg>
<div style="position:absolute;left:557.20px;top:407.50px;width:103.90px;height:25.30px;box-sizing:border-box;border:1px solid #8c8c8c;border-top-color:#a2a2a2;background:linear-gradient(#fbfbfb,#f1f1f1 50%,#e9e9e9 52%,#f4f4f4);"></div>
<svg class="s" width="1" height="1"><text transform="translate(584.00 424.70) scale(1 1.12)" fill="#0e0e0e" stroke="#0e0e0e" stroke-width="0.15" style="font-family:'Liberation Sans', sans-serif;font-size:8.9px;font-weight:bold;white-space:pre;letter-spacing:0.4px;">Open in PyMOL</text></svg>
<svg style="position:absolute;left:561px;top:324.6px;" width="19.5" height="19.5" viewBox="0 0 20 20"><defs><radialGradient id="g2" cx="50%" cy="40%" r="65%"><stop offset="0" stop-color="#f2f2f2"/><stop offset="0.7" stop-color="#dedede"/><stop offset="1" stop-color="#c6c6c6"/></radialGradient></defs>
<polygon points="17.11,7.05 17.49,8.20 19.36,8.37 19.36,11.63 17.49,11.80 17.11,12.95 16.57,14.02 17.77,15.46 15.46,17.77 14.02,16.57 12.95,17.11 11.80,17.49 11.63,19.36 8.37,19.36 8.20,17.49 7.05,17.11 5.98,16.57 4.54,17.77 2.23,15.46 3.43,14.02 2.89,12.95 2.51,11.80 0.64,11.63 0.64,8.37 2.51,8.20 2.89,7.05 3.43,5.98 2.23,4.54 4.54,2.23 5.98,3.43 7.05,2.89 8.20,2.51 8.37,0.64 11.63,0.64 11.80,2.51 12.95,2.89 14.02,3.43 15.46,2.23 17.77,4.54 16.57,5.98" fill="url(#g2)" stroke="#a8a8a8" stroke-width="0.6" stroke-linejoin="round"/>
<circle cx="10" cy="10" r="2.5" fill="#a4a4a4"/><circle cx="10" cy="10.2" r="1.4" fill="#cfcfcf"/></svg>
<svg style="position:absolute;left:561px;top:353.5px;" width="19.5" height="19.5" viewBox="0 0 20 20"><path d="M2.4 2.4 L17.6 17.6 M17.6 2.4 L2.4 17.6" stroke="#cdbcbc" stroke-width="5.3"/><path d="M2.9 2.9 L17.1 17.1 M17.1 2.9 L2.9 17.1" stroke="#eba5a5" stroke-width="4.3"/></svg>
<svg style="position:absolute;left:558px;top:378px;" width="26" height="26" viewBox="0 0 26 26">
<path d="M3.2 12.8 Q7 9.4 11 8.2 Q15 6.6 17.6 7.6 L19.2 9.6 Q18.8 12.6 16.6 14.2 Q13.5 16 10.2 15.8 Q6.5 15.2 3.2 12.8Z" fill="#5c5868"/>
<path d="M5 12.6 Q9 10.6 14 10.2" stroke="#6e6a7a" stroke-width="0.6" fill="none"/>
<circle cx="18.9" cy="8.1" r="1.8" fill="#141416"/>
<path d="M20.2 9.2 L21.5 13.2" stroke="#e6e8c8" stroke-width="0.9"/>
<path d="M8.6 15.6 L9.6 18.6 M13.2 16 L15.2 19.2" stroke="#a8a860" stroke-width="0.9"/>
<path d="M8.4 18.8 L12 18.9 M14.8 19.3 L18.6 19.7" stroke="#555" stroke-width="1"/>
</svg>
<svg style="position:absolute;left:558px;top:408px;" width="26" height="24" viewBox="0 0 26 24">
<path d="M4.5 4 Q3.6 10 4.6 18.5" stroke="#c8401e" stroke-width="2.6" fill="none" opacity=".85"/>
<path d="M6.2 5 Q5.6 11 6.4 18" stroke="#e0782a" stroke-width="1.4" fill="none" opacity=".8"/>
<path d="M4 3.6 L6 4" stroke="#9070c0" stroke-width="1.6" opacity=".8"/>
<path d="M6 19 L12.5 6.5" stroke="#e8b020" stroke-width="1.5" opacity=".85"/>
<path d="M8.5 20 L15 7" stroke="#d8d830" stroke-width="1.5" opacity=".85"/>
<path d="M11 20.5 L17.5 7" stroke="#90d040" stroke-width="1.5" opacity=".85"/>
<path d="M13.5 20 L19.5 7.5" stroke="#50c040" stroke-width="1.5" opacity=".85"/>
<path d="M16.5 19 L20.5 8" stroke="#40b050" stroke-width="1.4" opacity=".8"/>
<path d="M7 8 L13 19 M10 6.5 L16 18" stroke="#b0d8f0" stroke-width="0.7" opacity=".7"/>
<path d="M17.5 14 Q19 18 21.5 20" stroke="#3a78d8" stroke-width="1.6" fill="none" opacity=".85"/>
<path d="M9 4.5 Q11 3 12.5 4.5 M15.5 5 Q17 3.2 18.5 5 M19.5 5.5 Q21.5 3 22.5 6" stroke="#a0d070" stroke-width="1" fill="none" opacity=".8"/>
<path d="M5.5 20.5 Q8 21.5 11 20.8" stroke="#d8c870" stroke-width="0.9" fill="none" opacity=".7"/>
</svg>
<div style="position:absolute;left:26.00px;top:452.00px;width:648.00px;height:1.00px;box-sizing:border-box;background:#cbcbcb;"></div>
<div style="position:absolute;left:26.00px;top:453.00px;width:648.00px;height:11.00px;box-sizing:border-box;background:#ececec;"></div>
<div style="position:absolute;left:26.00px;top:463.00px;width:648.00px;height:1.00px;box-sizing:border-box;background:#f6f6f6;"></div>
<div style="position:absolute;left:27.2px;top:454.1px;width:8.9px;height:8.9px;border-radius:50%;background:radial-gradient(circle at 50% 30%,#6c8cff 0%,#1236e6 30%,#0a26cc 65%,#061488);box-shadow:0 0 0 0.5px rgba(0,0,50,.6);"></div>
<svg class="s" width="1" height="1"><text transform="translate(39.80 460.80) scale(1 1.0)" fill="#101010" stroke="#101010" stroke-width="0.3" style="font-family:'Liberation Sans', sans-serif;font-size:6.9px;font-weight:normal;white-space:pre;">Idle</text></svg>
<svg class="s" width="1" height="1"><text transform="translate(461.00 460.20) scale(1 1.0)" fill="#141414" stroke="#141414" stroke-width="0.22" style="font-family:'Liberation Sans', sans-serif;font-size:7.0px;font-weight:normal;white-space:pre;letter-spacing:0.1px;">Project: PKA</text></svg>
<svg style="position:absolute;left:664px;top:455px;" width="10" height="9" viewBox="0 0 10 9"><path d="M9.5 1.5 L2 9 M9.5 4.5 L5 9 M9.5 7.5 L8 9" stroke="#8e8e8e" stroke-width="0.7"/></svg>
</body></html>
